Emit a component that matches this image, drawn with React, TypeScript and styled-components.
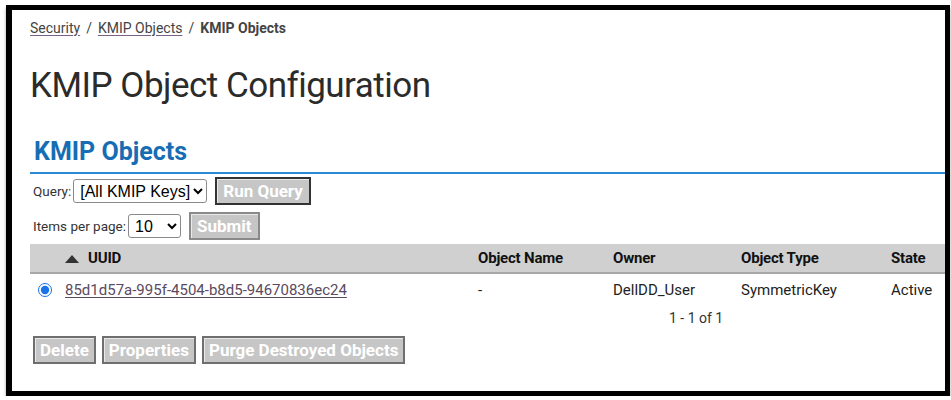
import * as React from 'react';
import styled, { createGlobalStyle } from 'styled-components';

const GlobalStyle = createGlobalStyle`
  html, body {
    margin: 0;
    padding: 0;
    background: #ffffff;
    font-family: Roboto, "Liberation Sans", sans-serif;
    color: #222;
  }
`;

const Frame = styled.div`
  box-sizing: border-box;
  margin: 5px 1px 0 6px;
  height: 391px;
  border: 5px solid #000;
  border-left-width: 6px;
  box-shadow: 0 3px 3px rgba(0, 0, 0, 0.35);
  padding: 5px 0 0 18px;
  overflow: hidden;
`;

const Crumbs = styled.nav`
  display: flex;
  align-items: center;
  gap: 6px;
  font-size: 14px;
  color: #444;
  height: 26px;
`;

const CrumbLink = styled.a`
  color: #444;
  text-decoration: underline;
  text-decoration-color: #7a5f86;
  text-underline-offset: 2px;
`;

const CrumbCurrent = styled.span`
  font-weight: 700;
  color: #444;
`;

const Title = styled.h1`
  margin: 21px 0 0 0;
  font-size: 35px;
  font-weight: 400;
  letter-spacing: -0.5px;
  color: #2b2b2b;
  line-height: 48px;
`;

const Section = styled.h2`
  margin: 26px 0 0 4px;
  font-size: 25px;
  font-weight: 700;
  color: #176db3;
  line-height: 32px;
`;

const Rule = styled.div`
  height: 2px;
  background: #2b8ad6;
  margin-top: 4px;
`;

const FormRow = styled.div<{ $top: number }>`
  display: flex;
  align-items: center;
  gap: 8px;
  margin: ${(p) => p.$top}px 0 0 3px;
  font-size: 13.5px;
  color: #333;
`;

const Label = styled.span`
  margin-right: -6px;
`;

const Select = styled.select<{ $w: number }>`
  width: ${(p) => p.$w}px;
  height: 24px;
  font-family: "Liberation Sans", Arial, sans-serif;
  font-size: 16px;
  color: #000;
  background: #fff;
  border: 1px solid #8a8a8a;
  border-radius: 3px;
  padding: 0 0 0 2px;
`;

const GreyButton = styled.button<{ $dark?: boolean }>`
  height: 28px;
  padding: 0 6px;
  background: #c6c6c6;
  color: #fff;
  font-family: Roboto, sans-serif;
  font-weight: 700;
  font-size: 17px;
  border: 2px solid ${(p) => (p.$dark ? '#333' : '#8a8a8a')};
  box-shadow: inset 1px 1px 0 #e9e9e9;
`;

const ActionButton = styled(GreyButton)`
  padding: 0 5px;
  border-color: #6f6f6f;
`;

const Table = styled.table`
  margin-top: 4px;
  width: 915px;
  border-collapse: collapse;
  table-layout: fixed;
  font-size: 15px;
`;

const HeadCell = styled.th<{ $w: number }>`
  width: ${(p) => p.$w}px;
  height: 28px;
  background: #d0d0d0;
  border-bottom: 2px solid #a8a8a8;
  text-align: left;
  padding: 0 0 0 8px;
  font-weight: 700;
  font-size: 15px;
  letter-spacing: -0.2px;
  color: #111;
  white-space: nowrap;
`;

const SortArrow = styled.span`
  display: inline-block;
  width: 0;
  height: 0;
  border-left: 7px solid transparent;
  border-right: 7px solid transparent;
  border-bottom: 8px solid #333;
  margin: 0 9px 0 27px;
`;

const Cell = styled.td`
  height: 32px;
  padding: 0 0 0 8px;
  color: #222;
  white-space: nowrap;
  overflow: hidden;
`;

const Radio = styled.input`
  width: 14px;
  height: 14px;
  margin: 0 13px 0 0;
  vertical-align: -2px;
  accent-color: #1a73e8;
`;

const IdLink = styled.a`
  color: #5b4a5e;
  text-decoration: underline;
  text-underline-offset: 2px;
`;

const Pager = styled.div`
  margin: 4px 0 0 639px;
  font-size: 14px;
  color: #333;
`;

const Actions = styled.div`
  display: flex;
  gap: 6px;
  margin: 10px 0 0 3px;
`;

export default function App() {
  return (
    <>
      <GlobalStyle />
      <Frame>
        <Crumbs>
          <CrumbLink>Security</CrumbLink>
          <span>/</span>
          <CrumbLink>KMIP Objects</CrumbLink>
          <span>/</span>
          <CrumbCurrent>KMIP Objects</CrumbCurrent>
        </Crumbs>
        <Title>KMIP Object Configuration</Title>
        <Section>KMIP Objects</Section>
        <Rule />
        <FormRow $top={3}>
          <Label>Query:</Label>
          <Select $w={134} defaultValue="all">
            <option value="all">[All KMIP Keys]</option>
          </Select>
          <GreyButton $dark>Run Query</GreyButton>
        </FormRow>
        <FormRow $top={7}>
          <Label>Items per page:</Label>
          <Select $w={53} defaultValue="10">
            <option value="10">10</option>
          </Select>
          <GreyButton>Submit</GreyButton>
        </FormRow>
        <Table>
          <thead>
            <tr>
              <HeadCell $w={432}>
                <SortArrow />
                UUID
              </HeadCell>
              <HeadCell $w={127}>Object Name</HeadCell>
              <HeadCell $w={120}>Owner</HeadCell>
              <HeadCell $w={142}>Object Type</HeadCell>
              <HeadCell $w={54}>State</HeadCell>
            </tr>
          </thead>
          <tbody>
            <tr>
              <Cell>
                <Radio type="radio" name="obj" defaultChecked />
                <IdLink>85d1d57a-995f-4504-b8d5-94670836ec24</IdLink>
              </Cell>
              <Cell>-</Cell>
              <Cell>DellDD_User</Cell>
              <Cell>SymmetricKey</Cell>
              <Cell>Active</Cell>
            </tr>
          </tbody>
        </Table>
        <Pager>1 - 1 of 1</Pager>
        <Actions>
          <ActionButton>Delete</ActionButton>
          <ActionButton>Properties</ActionButton>
          <ActionButton>Purge Destroyed Objects</ActionButton>
        </Actions>
      </Frame>
    </>
  );
}
